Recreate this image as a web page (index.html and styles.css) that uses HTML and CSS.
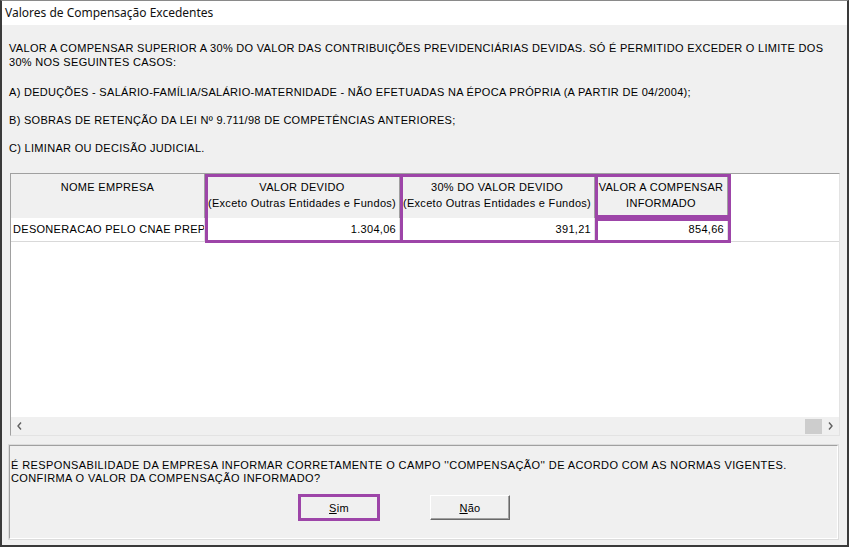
FILE: index.html
```html
<!DOCTYPE html>
<html lang="pt-BR">
<head>
  <meta charset="UTF-8" />
  <title>Valores de Compensação Excedentes</title>
  <link rel="stylesheet" href="styles.css">
</head>
<body>
  <div class="window">
    <div class="titlebar">Valores de Compensação Excedentes</div>

    <div class="client">
      <div class="notice">
        <p>VALOR A COMPENSAR SUPERIOR A 30% DO VALOR DAS CONTRIBUIÇÕES PREVIDENCIÁRIAS DEVIDAS. SÓ É PERMITIDO EXCEDER O LIMITE DOS<br>30% NOS SEGUINTES CASOS:</p>
        <p>A) DEDUÇÕES - SALÁRIO-FAMÍLIA/SALÁRIO-MATERNIDADE - NÃO EFETUADAS NA ÉPOCA PRÓPRIA (A PARTIR DE 04/2004);</p>
        <p>B) SOBRAS DE RETENÇÃO DA LEI Nº 9.711/98 DE COMPETÊNCIAS ANTERIORES;</p>
        <p>C) LIMINAR OU DECISÃO JUDICIAL.</p>
      </div>

      <div class="grid">
        <div class="grid-view">
          <div class="grid-row grid-head">
            <div class="cell">NOME EMPRESA</div>
            <div class="cell">VALOR DEVIDO<br>(Exceto Outras Entidades e Fundos)</div>
            <div class="cell">30% DO VALOR DEVIDO<br>(Exceto Outras Entidades e Fundos)</div>
            <div class="cell">VALOR A COMPENSAR<br>INFORMADO</div>
          </div>
          <div class="grid-row grid-data">
            <div class="cell">DESONERACAO PELO CNAE PREP</div>
            <div class="cell num">1.304,06</div>
            <div class="cell num">391,21</div>
            <div class="cell num">854,66</div>
          </div>
        </div>

        <div class="hscroll">
          <span class="arrow">
            <svg width="5" height="8" viewBox="0 0 5 8"><path d="M4 0.5 L1 4 L4 7.5" fill="none" stroke="#606060" stroke-width="1.4"/></svg>
          </span>
          <span class="track"><span class="thumb"></span></span>
          <span class="arrow">
            <svg width="5" height="8" viewBox="0 0 5 8"><path d="M1 0.5 L4 4 L1 7.5" fill="none" stroke="#606060" stroke-width="1.4"/></svg>
          </span>
        </div>

        <!-- destaque das colunas conferidas -->
        <div class="mark mark-devido"></div>
        <div class="mark mark-30"></div>
        <div class="mark mark-head-comp"></div>
        <div class="mark mark-data-comp"></div>
      </div>

      <div class="confirm">
        <p>É RESPONSABILIDADE DA EMPRESA INFORMAR CORRETAMENTE O CAMPO ''COMPENSAÇÃO'' DE ACORDO COM AS NORMAS VIGENTES.<br>CONFIRMA O VALOR DA COMPENSAÇÃO INFORMADO?</p>
        <div class="actions">
          <button class="btn btn-marked"><u>S</u>im</button>
          <button class="btn"><u>N</u>ão</button>
        </div>
      </div>
    </div>
  </div>
</body>
</html>
```

FILE: styles.css
```css
body {
  margin: 0;
  background: #fff;
  font-family: "Liberation Sans", Arial, sans-serif;
  font-size: 11px;
  letter-spacing: 0.3px;
  color: #000;
}
.window {
  width: 849px;
  height: 547px;
  box-sizing: border-box;
  border: 2px solid #3a3a3a;
  border-top: 1px solid #8a8a8a;
  background: #f0f0f0;
  display: flex;
  flex-direction: column;
}
.titlebar {
  height: 24px;
  background: #fff;
  font-family: "Noto Sans", sans-serif;
  font-size: 12px;
  letter-spacing: 0;
  line-height: 23px;
  padding-left: 3px;
  color: #111;
}
.client {
  flex: 1;
  padding: 16px 8px 0 7px;
  display: flex;
  flex-direction: column;
}
.notice p {
  margin: 0 0 14px;
  line-height: 14px;
}
.notice p:first-child {
  margin-bottom: 16px;
}
.notice p:last-child {
  margin-bottom: 0;
}

/* grade */
.grid {
  position: relative;
  margin: 18px 0 0 1px;
  width: 830px;
  height: 263px;
  box-sizing: border-box;
  border: 1px solid;
  border-color: #a0a0a0 #e3e3e3 #e3e3e3 #a0a0a0;
  display: flex;
  flex-direction: column;
}
.grid-view {
  flex: 1;
  background: #fff;
  overflow: hidden;
}
.grid-row {
  display: grid;
  grid-template-columns: 194px 195px 195px 133px;
}
.cell {
  box-sizing: border-box;
  border-right: 1px solid #a0a0a0;
  white-space: nowrap;
  overflow: hidden;
}
.grid-head .cell {
  height: 44px;
  padding-top: 5px;
  line-height: 16px;
  text-align: center;
  background: #f0f0f0;
}
.grid-data {
  border-bottom: 1px solid #d9d9d9;
}
.grid-data .cell {
  height: 23px;
  line-height: 23px;
  padding: 0 3px 0 2px;
  border-right-color: #e0e0e0;
}
.grid-data .cell.num {
  text-align: right;
}
.hscroll {
  height: 18px;
  background: #f0f0f0;
  display: flex;
  align-items: center;
}
.arrow {
  width: 17px;
  display: flex;
  justify-content: center;
}
.track {
  flex: 1;
  display: flex;
  justify-content: flex-end;
}
.thumb {
  width: 17px;
  height: 15px;
  background: #cdcdcd;
}

/* marcações roxas */
.mark {
  position: absolute;
  box-sizing: border-box;
  border: 3px solid #9d45a8;
}
.mark-devido {
  left: 194px;
  top: 0;
  width: 198px;
  height: 69px;
}
.mark-30 {
  left: 389px;
  top: 0;
  width: 198px;
  height: 69px;
}
.mark-head-comp {
  left: 584px;
  top: 0;
  width: 136px;
  height: 44px;
}
.mark-data-comp {
  left: 584px;
  top: 44px;
  width: 136px;
  height: 25px;
}

/* painel de confirmação */
.confirm {
  margin-top: 9px;
  width: 829px;
  height: 94px;
  box-sizing: border-box;
  border: 1px solid;
  border-color: #a0a0a0 #fff #fff #a0a0a0;
  box-shadow: 0 0 0 1px #dcdcdc;
  padding: 13px 0 0 1px;
}
.confirm p {
  margin: 0;
  line-height: 13px;
  letter-spacing: 0.39px;
}
.actions {
  display: flex;
  gap: 51px;
  margin: 10px 0 0 288px;
}
.btn {
  width: 80px;
  height: 25px;
  box-sizing: border-box;
  background: #f0f0f0;
  border: 1px solid;
  border-color: #fff #696969 #696969 #fff;
  box-shadow: inset -1px -1px 0 #a0a0a0;
  font-family: "Liberation Sans", Arial, sans-serif;
  font-size: 11px;
  letter-spacing: 0.3px;
  color: #000;
  padding: 0;
}
.btn-marked {
  outline: 3px solid #9d45a8;
  outline-offset: -2px;
}
```
